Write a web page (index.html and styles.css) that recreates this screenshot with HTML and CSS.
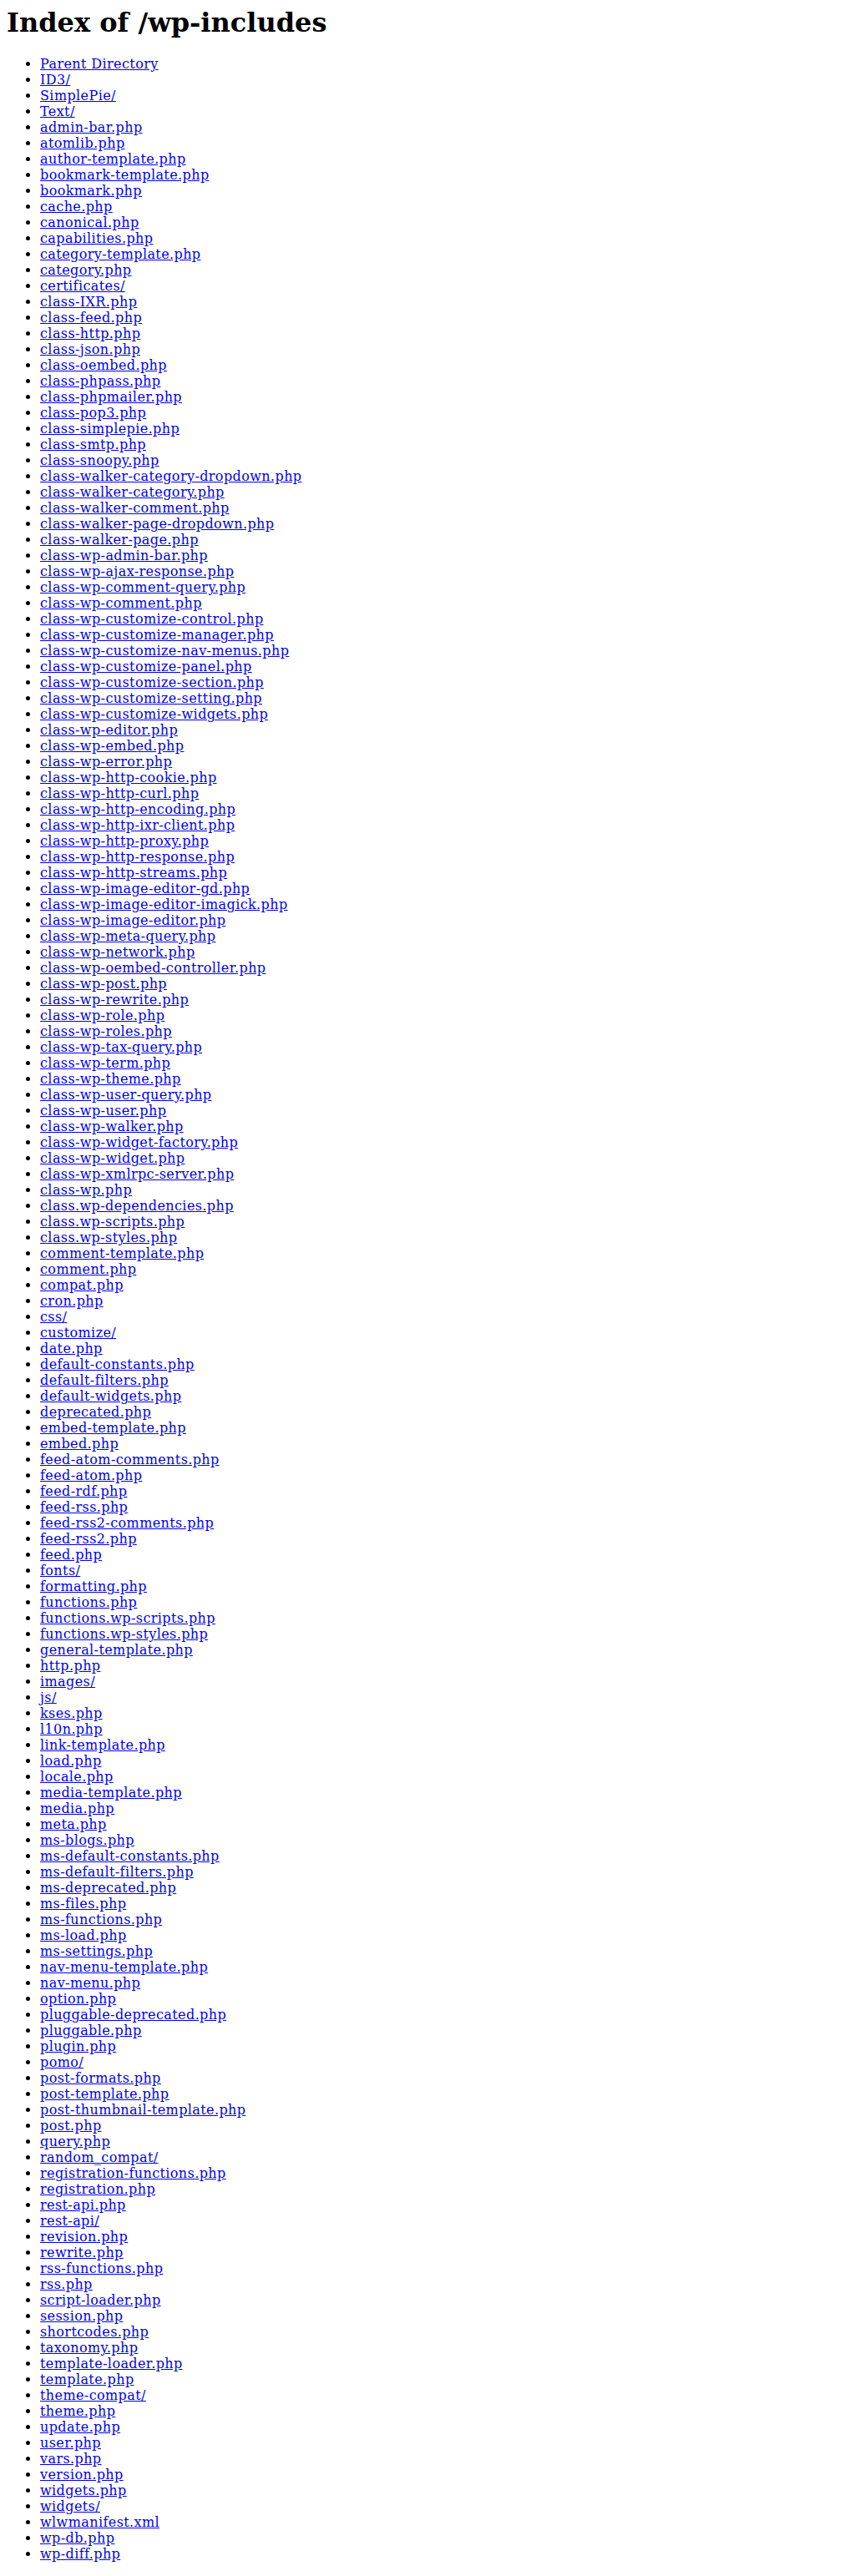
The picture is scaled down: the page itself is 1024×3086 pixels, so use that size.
FILE: index.html
```html
<!DOCTYPE html>
<html>
<head>
<meta charset="utf-8">
<title>Index of /wp-includes</title>
<link rel="stylesheet" href="styles.css">
</head>
<body>
<h1 class="title">Index of /wp-includes</h1>
<ul class="listing">
<li><a href="#">Parent Directory</a></li>
<li><a href="#">ID3/</a></li>
<li><a href="#">SimplePie/</a></li>
<li><a href="#">Text/</a></li>
<li><a href="#">admin-bar.php</a></li>
<li><a href="#">atomlib.php</a></li>
<li><a href="#">author-template.php</a></li>
<li><a href="#">bookmark-template.php</a></li>
<li><a href="#">bookmark.php</a></li>
<li><a href="#">cache.php</a></li>
<li><a href="#">canonical.php</a></li>
<li><a href="#">capabilities.php</a></li>
<li><a href="#">category-template.php</a></li>
<li><a href="#">category.php</a></li>
<li><a href="#">certificates/</a></li>
<li><a href="#">class-IXR.php</a></li>
<li><a href="#">class-feed.php</a></li>
<li><a href="#">class-http.php</a></li>
<li><a href="#">class-json.php</a></li>
<li><a href="#">class-oembed.php</a></li>
<li><a href="#">class-phpass.php</a></li>
<li><a href="#">class-phpmailer.php</a></li>
<li><a href="#">class-pop3.php</a></li>
<li><a href="#">class-simplepie.php</a></li>
<li><a href="#">class-smtp.php</a></li>
<li><a href="#">class-snoopy.php</a></li>
<li><a href="#">class-walker-category-dropdown.php</a></li>
<li><a href="#">class-walker-category.php</a></li>
<li><a href="#">class-walker-comment.php</a></li>
<li><a href="#">class-walker-page-dropdown.php</a></li>
<li><a href="#">class-walker-page.php</a></li>
<li><a href="#">class-wp-admin-bar.php</a></li>
<li><a href="#">class-wp-ajax-response.php</a></li>
<li><a href="#">class-wp-comment-query.php</a></li>
<li><a href="#">class-wp-comment.php</a></li>
<li><a href="#">class-wp-customize-control.php</a></li>
<li><a href="#">class-wp-customize-manager.php</a></li>
<li><a href="#">class-wp-customize-nav-menus.php</a></li>
<li><a href="#">class-wp-customize-panel.php</a></li>
<li><a href="#">class-wp-customize-section.php</a></li>
<li><a href="#">class-wp-customize-setting.php</a></li>
<li><a href="#">class-wp-customize-widgets.php</a></li>
<li><a href="#">class-wp-editor.php</a></li>
<li><a href="#">class-wp-embed.php</a></li>
<li><a href="#">class-wp-error.php</a></li>
<li><a href="#">class-wp-http-cookie.php</a></li>
<li><a href="#">class-wp-http-curl.php</a></li>
<li><a href="#">class-wp-http-encoding.php</a></li>
<li><a href="#">class-wp-http-ixr-client.php</a></li>
<li><a href="#">class-wp-http-proxy.php</a></li>
<li><a href="#">class-wp-http-response.php</a></li>
<li><a href="#">class-wp-http-streams.php</a></li>
<li><a href="#">class-wp-image-editor-gd.php</a></li>
<li><a href="#">class-wp-image-editor-imagick.php</a></li>
<li><a href="#">class-wp-image-editor.php</a></li>
<li><a href="#">class-wp-meta-query.php</a></li>
<li><a href="#">class-wp-network.php</a></li>
<li><a href="#">class-wp-oembed-controller.php</a></li>
<li><a href="#">class-wp-post.php</a></li>
<li><a href="#">class-wp-rewrite.php</a></li>
<li><a href="#">class-wp-role.php</a></li>
<li><a href="#">class-wp-roles.php</a></li>
<li><a href="#">class-wp-tax-query.php</a></li>
<li><a href="#">class-wp-term.php</a></li>
<li><a href="#">class-wp-theme.php</a></li>
<li><a href="#">class-wp-user-query.php</a></li>
<li><a href="#">class-wp-user.php</a></li>
<li><a href="#">class-wp-walker.php</a></li>
<li><a href="#">class-wp-widget-factory.php</a></li>
<li><a href="#">class-wp-widget.php</a></li>
<li><a href="#">class-wp-xmlrpc-server.php</a></li>
<li><a href="#">class-wp.php</a></li>
<li><a href="#">class.wp-dependencies.php</a></li>
<li><a href="#">class.wp-scripts.php</a></li>
<li><a href="#">class.wp-styles.php</a></li>
<li><a href="#">comment-template.php</a></li>
<li><a href="#">comment.php</a></li>
<li><a href="#">compat.php</a></li>
<li><a href="#">cron.php</a></li>
<li><a href="#">css/</a></li>
<li><a href="#">customize/</a></li>
<li><a href="#">date.php</a></li>
<li><a href="#">default-constants.php</a></li>
<li><a href="#">default-filters.php</a></li>
<li><a href="#">default-widgets.php</a></li>
<li><a href="#">deprecated.php</a></li>
<li><a href="#">embed-template.php</a></li>
<li><a href="#">embed.php</a></li>
<li><a href="#">feed-atom-comments.php</a></li>
<li><a href="#">feed-atom.php</a></li>
<li><a href="#">feed-rdf.php</a></li>
<li><a href="#">feed-rss.php</a></li>
<li><a href="#">feed-rss2-comments.php</a></li>
<li><a href="#">feed-rss2.php</a></li>
<li><a href="#">feed.php</a></li>
<li><a href="#">fonts/</a></li>
<li><a href="#">formatting.php</a></li>
<li><a href="#">functions.php</a></li>
<li><a href="#">functions.wp-scripts.php</a></li>
<li><a href="#">functions.wp-styles.php</a></li>
<li><a href="#">general-template.php</a></li>
<li><a href="#">http.php</a></li>
<li><a href="#">images/</a></li>
<li><a href="#">js/</a></li>
<li><a href="#">kses.php</a></li>
<li><a href="#">l10n.php</a></li>
<li><a href="#">link-template.php</a></li>
<li><a href="#">load.php</a></li>
<li><a href="#">locale.php</a></li>
<li><a href="#">media-template.php</a></li>
<li><a href="#">media.php</a></li>
<li><a href="#">meta.php</a></li>
<li><a href="#">ms-blogs.php</a></li>
<li><a href="#">ms-default-constants.php</a></li>
<li><a href="#">ms-default-filters.php</a></li>
<li><a href="#">ms-deprecated.php</a></li>
<li><a href="#">ms-files.php</a></li>
<li><a href="#">ms-functions.php</a></li>
<li><a href="#">ms-load.php</a></li>
<li><a href="#">ms-settings.php</a></li>
<li><a href="#">nav-menu-template.php</a></li>
<li><a href="#">nav-menu.php</a></li>
<li><a href="#">option.php</a></li>
<li><a href="#">pluggable-deprecated.php</a></li>
<li><a href="#">pluggable.php</a></li>
<li><a href="#">plugin.php</a></li>
<li><a href="#">pomo/</a></li>
<li><a href="#">post-formats.php</a></li>
<li><a href="#">post-template.php</a></li>
<li><a href="#">post-thumbnail-template.php</a></li>
<li><a href="#">post.php</a></li>
<li><a href="#">query.php</a></li>
<li><a href="#">random_compat/</a></li>
<li><a href="#">registration-functions.php</a></li>
<li><a href="#">registration.php</a></li>
<li><a href="#">rest-api.php</a></li>
<li><a href="#">rest-api/</a></li>
<li><a href="#">revision.php</a></li>
<li><a href="#">rewrite.php</a></li>
<li><a href="#">rss-functions.php</a></li>
<li><a href="#">rss.php</a></li>
<li><a href="#">script-loader.php</a></li>
<li><a href="#">session.php</a></li>
<li><a href="#">shortcodes.php</a></li>
<li><a href="#">taxonomy.php</a></li>
<li><a href="#">template-loader.php</a></li>
<li><a href="#">template.php</a></li>
<li><a href="#">theme-compat/</a></li>
<li><a href="#">theme.php</a></li>
<li><a href="#">update.php</a></li>
<li><a href="#">user.php</a></li>
<li><a href="#">vars.php</a></li>
<li><a href="#">version.php</a></li>
<li><a href="#">widgets.php</a></li>
<li><a href="#">widgets/</a></li>
<li><a href="#">wlwmanifest.xml</a></li>
<li><a href="#">wp-db.php</a></li>
<li><a href="#">wp-diff.php</a></li>
</ul>
</body>
</html>
```

FILE: styles.css
```css
body {
  margin: 8px;
  font-family: "DejaVu Serif", serif;
  background: #ffffff;
  color: #000000;
}

.title {
  font-size: 2em;
  font-weight: bold;
  margin: 0 0 0.67em 0;
}

.listing {
  margin: 1em 0;
  padding-left: 40px;
}

.listing li {
  line-height: 19px;
}

.listing a {
  color: #0000ee;
  letter-spacing: 0.4px;
}
```
